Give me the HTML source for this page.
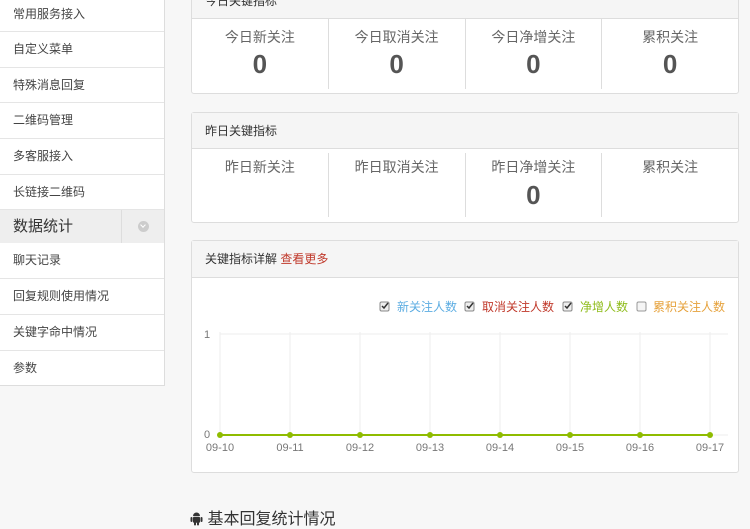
<!DOCTYPE html>
<html><head><meta charset="utf-8"><style>
body{margin:0;width:750px;height:527px;overflow:hidden;background:#f7f7f7;font-family:"Liberation Sans","Noto Sans CJK SC",sans-serif;position:relative}
.side{position:absolute;left:0;top:0;width:164px;height:385px;background:#fff;border-right:1px solid #ddd;border-bottom:1px solid #ddd}
.it{position:absolute;left:0;width:164px;border-bottom:1px solid #e5e5e5;font-size:12px;color:#444;box-sizing:border-box;padding-left:13px}
.grp{position:absolute;left:0;top:210px;width:164px;height:33px;background:#eee;font-size:15px;color:#333;line-height:33px;box-sizing:border-box;padding-left:13px}
.grp .ch{position:absolute;left:121px;top:0;width:43px;height:33px;border-left:1px solid #ddd}
.grp .ch i{position:absolute;left:16px;top:11px;width:11px;height:11px;border-radius:50%;background:#ccc}
.grp .ch i:after{content:"";position:absolute;left:3px;top:2px;width:3px;height:3px;border-right:1.5px solid #fff;border-bottom:1.5px solid #fff;transform:rotate(45deg)}
.panel{position:absolute;left:191px;width:548px;background:#fff;border:1px solid #ddd;border-radius:3px;box-sizing:border-box}
.ph{background:#f5f5f5;border-bottom:1px solid #ddd;font-size:12px;color:#333;padding-left:13px;box-sizing:border-box}
.cols{display:flex}
.c{flex:1;text-align:center;border-right:1px solid #ddd;font-size:14px;color:#666;padding-top:9px;line-height:18px}
.c:last-child{border-right:none}
.c b{display:block;font-size:26px;color:#555;margin-top:6px;line-height:26px}
</style></head><body>
<div class="side">
<div class="it" style="top:0;height:32px;line-height:28px">常用服务接入</div>
<div class="it" style="top:32px;height:36px;line-height:34px">自定义菜单</div>
<div class="it" style="top:68px;height:35px;line-height:34px">特殊消息回复</div>
<div class="it" style="top:103px;height:36px;line-height:34px">二维码管理</div>
<div class="it" style="top:139px;height:36px;line-height:34px">多客服接入</div>
<div class="it" style="top:175px;height:35px;line-height:34px">长链接二维码</div>
<div class="grp">数据统计<div class="ch"><i></i></div></div>
<div class="it" style="top:243px;height:36px;line-height:34px">聊天记录</div>
<div class="it" style="top:279px;height:36px;line-height:34px">回复规则使用情况</div>
<div class="it" style="top:315px;height:36px;line-height:34px">关键字命中情况</div>
<div class="it" style="top:351px;height:34px;line-height:34px;border-bottom:none">参数</div>
</div>

<div class="panel" style="top:-20px;height:114px">
<div class="ph" style="height:38px;line-height:40px">今日关键指标</div>
<div class="cols" style="height:70px;box-sizing:border-box">
<div class="c" style="padding-top:9px">今日新关注<b style="margin-top:5px">0</b></div><div class="c" style="padding-top:9px">今日取消关注<b style="margin-top:5px">0</b></div><div class="c" style="padding-top:9px">今日净增关注<b style="margin-top:5px">0</b></div><div class="c" style="padding-top:9px">累积关注<b style="margin-top:5px">0</b></div>
</div></div>

<div class="panel" style="top:112px;height:111px">
<div class="ph" style="height:36px;line-height:36px">昨日关键指标</div>
<div class="cols" style="height:68px;padding-top:4px;box-sizing:border-box">
<div class="c" style="padding-top:5px">昨日新关注</div><div class="c" style="padding-top:5px">昨日取消关注</div><div class="c" style="padding-top:5px">昨日净增关注<b>0</b></div><div class="c" style="padding-top:5px">累积关注</div>
</div></div>

<div class="panel" style="top:240px;height:233px">
<div class="ph" style="height:37px;line-height:36px">关键指标详解 <span style="color:#c0392b">查看更多</span></div>
</div>
<svg style="position:absolute;left:191px;top:277px" width="548" height="195" font-family="Liberation Sans,Noto Sans CJK SC,sans-serif">
<g font-size="12">
<rect x="189" y="25" width="9" height="9" rx="1.5" fill="#eee" stroke="#888"/><path d="M191 29l2 2 4-5" stroke="#333" fill="none" stroke-width="1.5"/>
<text x="206" y="34" fill="#5dade2">新关注人数</text>
<rect x="274" y="25" width="9" height="9" rx="1.5" fill="#eee" stroke="#888"/><path d="M276 29l2 2 4-5" stroke="#333" fill="none" stroke-width="1.5"/>
<text x="291" y="34" fill="#c0392b">取消关注人数</text>
<rect x="372" y="25" width="9" height="9" rx="1.5" fill="#eee" stroke="#888"/><path d="M374 29l2 2 4-5" stroke="#333" fill="none" stroke-width="1.5"/>
<text x="389" y="34" fill="#8fbc1c">净增人数</text>
<rect x="446" y="25" width="9" height="9" rx="1.5" fill="#f5f5f5" stroke="#999"/>
<text x="462" y="34" fill="#e6a23c">累积关注人数</text>
</g>
<g stroke="#eee">
<line x1="29" y1="57" x2="537" y2="57"/><line x1="29" y1="158" x2="537" y2="158"/>
<line x1="29" y1="55" x2="29" y2="158"/><line x1="99" y1="55" x2="99" y2="158"/><line x1="169" y1="55" x2="169" y2="158"/><line x1="239" y1="55" x2="239" y2="158"/><line x1="309" y1="55" x2="309" y2="158"/><line x1="379" y1="55" x2="379" y2="158"/><line x1="449" y1="55" x2="449" y2="158"/><line x1="519" y1="55" x2="519" y2="158"/>
</g>
<line x1="29" y1="158" x2="519" y2="158" stroke="#8fbc00" stroke-width="2"/>
<g fill="#8fbc00"><circle cx="29" cy="158" r="3"/><circle cx="99" cy="158" r="3"/><circle cx="169" cy="158" r="3"/><circle cx="239" cy="158" r="3"/><circle cx="309" cy="158" r="3"/><circle cx="379" cy="158" r="3"/><circle cx="449" cy="158" r="3"/><circle cx="519" cy="158" r="3"/></g>
<g font-size="11" fill="#777" text-anchor="middle">
<text x="16" y="61">1</text><text x="16" y="161">0</text>
<text x="29" y="174">09-10</text><text x="99" y="174">09-11</text><text x="169" y="174">09-12</text><text x="239" y="174">09-13</text><text x="309" y="174">09-14</text><text x="379" y="174">09-15</text><text x="449" y="174">09-16</text><text x="519" y="174">09-17</text>
</g>
</svg>
<div style="position:absolute;left:190px;top:505px;font-size:16px;color:#333;white-space:nowrap"><svg width="13" height="15" viewBox="0 0 13 15" style="vertical-align:-2px"><path d="M3 5a3.5 3.5 0 0 1 7 0z" fill="#333"/><rect x="3" y="5.8" width="7" height="6" rx="1" fill="#333"/><rect x="0.5" y="6" width="2" height="5" rx="1" fill="#333"/><rect x="10.5" y="6" width="2" height="5" rx="1" fill="#333"/><rect x="4" y="11" width="2" height="3.5" rx="1" fill="#333"/><rect x="7" y="11" width="2" height="3.5" rx="1" fill="#333"/></svg> 基本回复统计情况</div>
</body></html>
